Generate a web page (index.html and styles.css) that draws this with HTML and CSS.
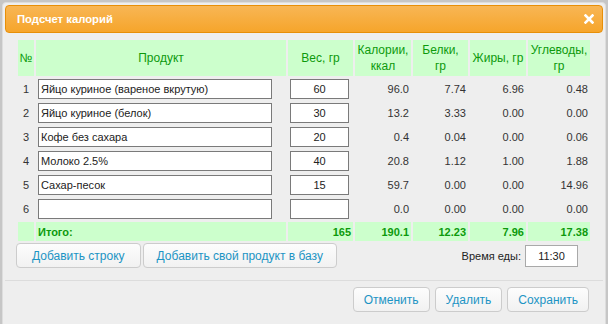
FILE: index.html
```html
<!DOCTYPE html>
<html lang="ru">
<head>
  <meta charset="UTF-8" />
  <meta name="viewport" content="width=device-width, initial-scale=1.0"/>
  <title>Подсчет калорий</title>
  <link rel="stylesheet" href="styles.css">
</head>
<body>
  <div class="dialog">
    <div class="titlebar">
      <span class="title">Подсчет калорий</span>
      <span class="close">
        <svg width="10" height="10" viewBox="0 0 10 10">
          <path d="M1.5 1.5 L8.5 8.5 M8.5 1.5 L1.5 8.5" stroke="#fff" stroke-width="2.6" stroke-linecap="square"/>
        </svg>
      </span>
    </div>

    <div class="content">
      <table class="calc">
        <colgroup>
          <col style="width:16px"><col style="width:250px"><col style="width:65px">
          <col style="width:56px"><col style="width:55px"><col style="width:56px"><col style="width:62px">
        </colgroup>
        <thead>
          <tr>
            <th>№</th>
            <th>Продукт</th>
            <th>Вес, гр</th>
            <th>Калории,<br>ккал</th>
            <th>Белки,<br>гр</th>
            <th>Жиры, гр</th>
            <th>Углеводы,<br>гр</th>
          </tr>
        </thead>
        <tbody>
          <tr>
            <td class="num">1</td>
            <td><input class="product" type="text" value="Яйцо куриное (вареное вкрутую)"></td>
            <td><input class="weight" type="text" value="60"></td>
            <td class="val">96.0</td><td class="val">7.74</td><td class="val">6.96</td><td class="val">0.48</td>
          </tr>
          <tr>
            <td class="num">2</td>
            <td><input class="product" type="text" value="Яйцо куриное (белок)"></td>
            <td><input class="weight" type="text" value="30"></td>
            <td class="val">13.2</td><td class="val">3.33</td><td class="val">0.00</td><td class="val">0.00</td>
          </tr>
          <tr>
            <td class="num">3</td>
            <td><input class="product" type="text" value="Кофе без сахара"></td>
            <td><input class="weight" type="text" value="20"></td>
            <td class="val">0.4</td><td class="val">0.04</td><td class="val">0.00</td><td class="val">0.06</td>
          </tr>
          <tr>
            <td class="num">4</td>
            <td><input class="product" type="text" value="Молоко 2.5%"></td>
            <td><input class="weight" type="text" value="40"></td>
            <td class="val">20.8</td><td class="val">1.12</td><td class="val">1.00</td><td class="val">1.88</td>
          </tr>
          <tr>
            <td class="num">5</td>
            <td><input class="product" type="text" value="Сахар-песок"></td>
            <td><input class="weight" type="text" value="15"></td>
            <td class="val">59.7</td><td class="val">0.00</td><td class="val">0.00</td><td class="val">14.96</td>
          </tr>
          <tr>
            <td class="num">6</td>
            <td><input class="product" type="text" value=""></td>
            <td><input class="weight" type="text" value=""></td>
            <td class="val">0.0</td><td class="val">0.00</td><td class="val">0.00</td><td class="val">0.00</td>
          </tr>
          <tr class="total">
            <td></td>
            <td>Итого:</td>
            <td class="val">165</td>
            <td class="val">190.1</td><td class="val">12.23</td><td class="val">7.96</td><td class="val">17.38</td>
          </tr>
        </tbody>
      </table>

      <div class="actions">
        <button class="btn add-row">Добавить строку</button>
        <button class="btn add-product">Добавить свой продукт в базу</button>
        <div class="meal-time">
          <label>Время еды:</label>
          <input class="time" type="text" value="11:30">
        </div>
      </div>
    </div>

    <div class="buttonpane">
      <button class="btn">Отменить</button>
      <button class="btn">Удалить</button>
      <button class="btn">Сохранить</button>
    </div>
  </div>
</body>
</html>
```

FILE: styles.css
```css
body {
  margin: 0;
  height: 324px;
  overflow: hidden;
  background-color: #c6c6c6;
  font-family: "Liberation Sans", Arial, sans-serif;
  color: #333;
}
.dialog {
  margin: 2px 0 0 2px;
  width: 598px;
  height: 340px;
  padding: 2px;
  background-color: #eee;
  border: 1px solid #ddd;
  border-radius: 4px;
}
.titlebar {
  height: 26px;
  padding: 0 8px 0 11px;
  display: flex;
  align-items: center;
  justify-content: space-between;
  background: linear-gradient(#f8b655, #f6a52b);
  border: 1px solid #e78f08;
  border-radius: 4px;
  color: white;
  font-weight: bold;
  font-size: 11.3px;
}
.close {
  display: flex;
}
.content {
  padding: 5px 11px 0 11px;
}
.calc {
  width: 576px;
  table-layout: fixed;
  border-spacing: 2px;
  font-size: 11px;
}
.calc th {
  height: 36px;
  padding: 0;
  background-color: #ccffcc;
  color: #0c9a0c;
  font-weight: normal;
  font-size: 12px;
  line-height: 16px;
}
.calc td {
  height: 22px;
  padding: 0 2px;
  box-sizing: border-box;
}
.calc .num {
  text-align: center;
}
.calc .val {
  text-align: right;
}
.calc input {
  display: block;
  height: 20px;
  box-sizing: border-box;
  border: 1px solid #7a7a7a;
  background: white;
  font-family: inherit;
  font-size: 11px;
  color: #222;
  padding: 0 2px;
}
.calc .product {
  width: 234px;
}
.calc .weight {
  width: 59px;
  text-align: center;
}
.calc .total td {
  height: 19px;
  background-color: #ccffcc;
  color: #0c9a0c;
  font-weight: bold;
}
.actions {
  display: flex;
  align-items: center;
  gap: 2px;
}
.btn {
  height: 25px;
  margin: 0;
  padding: 0 15px;
  background: linear-gradient(#fdfdfd, #f1f1f1);
  border: 1px solid #ccc;
  border-radius: 4px;
  color: #1c94c4;
  font-family: inherit;
  font-size: 12px;
}
.add-product {
  padding: 0 13px;
}
.meal-time {
  margin-left: auto;
  margin-right: 14px;
  display: flex;
  align-items: center;
  gap: 4px;
  font-size: 11px;
  color: #222;
}
.time {
  width: 53px;
  height: 22px;
  box-sizing: border-box;
  border: 1px solid #a9a9a9;
  text-align: center;
  font-family: inherit;
  font-size: 11px;
  color: #222;
}
.buttonpane {
  margin-top: 12px;
  padding: 6px 14px 0 0;
  border-top: 1px solid #dcdcdc;
  display: flex;
  justify-content: flex-end;
  gap: 5px;
}
.buttonpane .btn {
  padding: 0 10px;
}
```
